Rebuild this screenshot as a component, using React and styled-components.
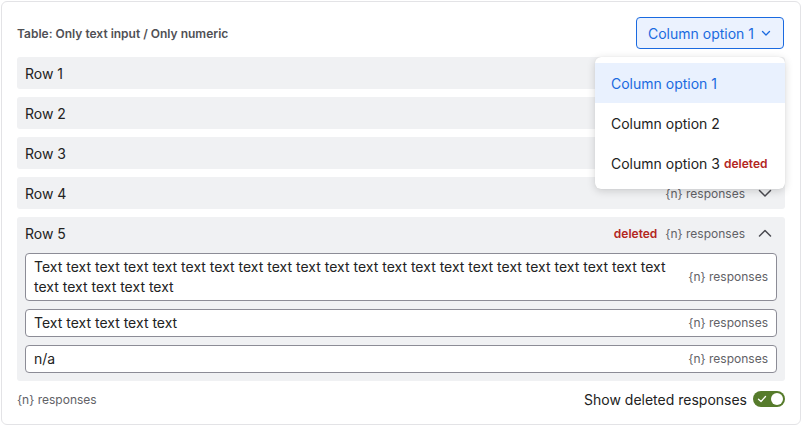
import styled, { createGlobalStyle } from "styled-components";

const GlobalStyle = createGlobalStyle`
  body {
    margin: 0;
    background: #fff;
    font-family: Inter, "Noto Sans", sans-serif;
    color: #222;
  }
`;

const Card = styled.div`
  margin: 1px;
  border: 1px solid #e3e3e6;
  border-radius: 6px;
  padding: 15px;
  position: relative;
`;

const Header = styled.div`
  display: flex;
  align-items: center;
  justify-content: space-between;
  height: 32px;
  margin-bottom: 8px;
`;

const Title = styled.div`
  font-size: 12px;
  font-weight: 600;
  color: #505055;
`;

const SelectWrap = styled.div`
  position: relative;
`;

const SelectButton = styled.button`
  display: flex;
  align-items: center;
  gap: 6px;
  height: 32px;
  padding: 0 11px;
  margin-right: 1px;
  border: 1px solid #1a6ae0;
  border-radius: 4px;
  background: #ebf2fe;
  color: #1a6ae0;
  font-family: inherit;
  font-size: 14px;
`;

const Menu = styled.div`
  position: absolute;
  top: 40px;
  right: 0;
  width: 190px;
  padding: 6px 0;
  background: #fff;
  border-radius: 6px;
  box-shadow: 0 2px 8px rgba(0, 0, 0, 0.16), 0 0 1px rgba(0, 0, 0, 0.12);
  z-index: 10;
`;

const MenuItem = styled.div`
  display: flex;
  align-items: center;
  gap: 4px;
  height: 40px;
  padding: 0 16px;
  font-size: 14px;
  color: ${(p) => (p.$active ? "#1a6ae0" : "#222")};
  background: ${(p) => (p.$active ? "#e9f1fe" : "transparent")};
`;

const Rows = styled.div`
  display: flex;
  flex-direction: column;
  gap: 8px;
`;

const RowBox = styled.div`
  background: #f0f1f3;
  border-radius: 3px;
`;

const RowHead = styled.div`
  display: flex;
  align-items: center;
  height: 32px;
  padding: 0 12px 0 8px;
  font-size: 14px;
`;

const RowLabel = styled.div`
  flex: 1;
`;

const Deleted = styled.span`
  font-size: 12px;
  font-weight: 600;
  color: #b3261e;
  margin-right: ${(p) => p.$gap || 0}px;
`;

const Count = styled.span`
  font-size: 12px;
  color: #616166;
`;

const Chevron = styled.svg`
  width: 16px;
  height: 16px;
  margin-left: 12px;
  flex: none;
`;

const Answers = styled.div`
  display: flex;
  flex-direction: column;
  gap: 8px;
  padding: 4px 8px 8px;
`;

const Answer = styled.div`
  display: flex;
  align-items: center;
  gap: 20px;
  background: #fff;
  border: 1px solid #8c8c96;
  border-radius: 4px;
  padding: 3px 8px;
  font-size: 14px;
  line-height: 20px;
`;

const AnswerText = styled.div`
  flex: 1;
`;

const Footer = styled.div`
  display: flex;
  align-items: center;
  justify-content: space-between;
  height: 20px;
  margin-top: 8px;
`;

const ToggleLabel = styled.label`
  display: flex;
  align-items: center;
  gap: 6px;
  font-size: 14px;
`;

const Toggle = styled.span`
  position: relative;
  width: 32px;
  height: 16px;
  border-radius: 8px;
  background: #567b2b;
  display: inline-block;

  &::after {
    content: "";
    position: absolute;
    right: 2px;
    top: 2px;
    width: 12px;
    height: 12px;
    border-radius: 50%;
    background: #fff;
  }

  svg {
    position: absolute;
    left: 4px;
    top: 3px;
  }
`;

const ChevronIcon = ({ up, color = "#4a4a50" }) => (
  <Chevron viewBox="0 0 16 16">
    <path
      d={up ? "M2.5 11 L8 5.5 L13.5 11" : "M2.5 5.5 L8 11 L13.5 5.5"}
      fill="none"
      stroke={color}
      strokeWidth="1.5"
      strokeLinecap="round"
      strokeLinejoin="round"
    />
  </Chevron>
);

const rows = ["Row 1", "Row 2", "Row 3", "Row 4"];

const answers = [
  "Text text text text text text text text text text text text text text text text text text text text text text text text text text text",
  "Text text text text text",
  "n/a",
];

export default function App() {
  return (
    <>
      <GlobalStyle />
      <Card>
        <Header>
          <Title>Table: Only text input / Only numeric</Title>
          <SelectWrap>
            <SelectButton>
              Column option 1
              <svg width="12" height="12" viewBox="0 0 12 12">
                <path
                  d="M2.5 4.5 L6 8 L9.5 4.5"
                  fill="none"
                  stroke="#1a6ae0"
                  strokeWidth="1.3"
                  strokeLinecap="round"
                  strokeLinejoin="round"
                />
              </svg>
            </SelectButton>
            <Menu>
              <MenuItem $active>Column option 1</MenuItem>
              <MenuItem>Column option 2</MenuItem>
              <MenuItem>
                Column option 3 <Deleted>deleted</Deleted>
              </MenuItem>
            </Menu>
          </SelectWrap>
        </Header>
        <Rows>
          {rows.map((r) => (
            <RowBox key={r}>
              <RowHead>
                <RowLabel>{r}</RowLabel>
                <Count>{"{n} responses"}</Count>
                <ChevronIcon />
              </RowHead>
            </RowBox>
          ))}
          <RowBox>
            <RowHead>
              <RowLabel>Row 5</RowLabel>
              <Deleted $gap={8}>deleted</Deleted>
              <Count>{"{n} responses"}</Count>
              <ChevronIcon up />
            </RowHead>
            <Answers>
              {answers.map((a, i) => (
                <Answer key={i}>
                  <AnswerText>{a}</AnswerText>
                  <Count>{"{n} responses"}</Count>
                </Answer>
              ))}
            </Answers>
          </RowBox>
        </Rows>
        <Footer>
          <Count>{"{n} responses"}</Count>
          <ToggleLabel>
            Show deleted responses
            <Toggle>
              <svg width="10" height="10" viewBox="0 0 10 10">
                <path
                  d="M1.5 5.2 L4 7.5 L8.5 2.5"
                  fill="none"
                  stroke="#fff"
                  strokeWidth="1.3"
                  strokeLinecap="round"
                  strokeLinejoin="round"
                />
              </svg>
            </Toggle>
          </ToggleLabel>
        </Footer>
      </Card>
    </>
  );
}
